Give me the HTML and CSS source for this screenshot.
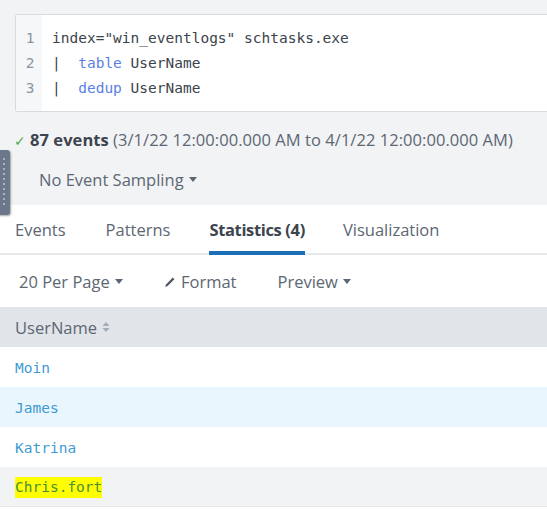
FILE: index.html
```html
<!DOCTYPE html>
<html>
<head>
<meta charset="utf-8">
<link rel="stylesheet" href="styles.css">
</head>
<body>
<div class="top">
  <div class="editor">
    <div class="gutter">
      <div class="ln">1</div>
      <div class="ln">2</div>
      <div class="ln">3</div>
    </div>
    <div class="code">
      <div class="cl">index="win_eventlogs" schtasks.exe</div>
      <div class="cl">|&nbsp; <span class="kw">table</span> UserName</div>
      <div class="cl">|&nbsp; <span class="kw">dedup</span> UserName</div>
    </div>
  </div>
  <div class="status"><span class="check">✓</span><b>87 events</b> (3/1/22 12:00:00.000 AM to 4/1/22 12:00:00.000 AM)</div>
  <div class="sampling">No Event Sampling <span class="caret"></span></div>
  <div class="handle"><span></span></div>
</div>
<div class="tabs">
  <div class="tab">Events</div>
  <div class="tab pat">Patterns</div>
  <div class="tab active">Statistics (4)</div>
  <div class="tab">Visualization</div>
</div>
<div class="toolbar">
  <div class="tool">20 Per Page <span class="caret"></span></div>
  <div class="tool fmt"><svg width="12" height="12" viewBox="0 0 12 12"><path d="M1.2 11 L2 8.4 L8.8 1.6 L10.4 3.2 L3.6 10 Z" fill="#4d5662"/></svg>Format</div>
  <div class="tool prev">Preview <span class="caret"></span></div>
</div>
<div class="table">
  <div class="th">UserName <svg class="sort" width="8" height="12" viewBox="0 0 8 12"><path d="M4 1 L7.5 5 H0.5 Z M4 11 L7.5 7 H0.5 Z" fill="#a3abb5"/></svg></div>
  <div class="tr"><span class="val">Moin</span></div>
  <div class="tr alt"><span class="val">James</span></div>
  <div class="tr"><span class="val">Katrina</span></div>
  <div class="tr last"><span class="val hl">Chris.fort</span></div>
</div>
</body>
</html>
```
FILE: styles.css
```css
* { box-sizing: border-box; }
html, body { margin: 0; padding: 0; background: #fff; }
body { font-family: "Open Sans", "Liberation Sans", sans-serif; color: #5c6773; width: 547px; overflow: hidden; }

.top { background: #f2f3f5; height: 205px; padding-top: 14px; position: relative; }
.editor {
  margin-left: 15px; height: 98px;
  border: 1px solid #d7dbe0; border-right: none; border-radius: 3px 0 0 3px;
  background: #fff; display: flex;
}
.gutter { width: 26px; background: #f6f7f8; padding-top: 11px; }
.ln { height: 25px; line-height: 25px; font-family: "DejaVu Sans Mono", monospace; font-size: 14.5px; color: #8a95a1; text-align: center; padding-left: 2px; }
.code { padding-top: 11px; padding-left: 10px; }
.cl { height: 25px; line-height: 25px; font-family: "DejaVu Sans Mono", monospace; font-size: 14.5px; color: #3c444d; white-space: pre; }
.kw { color: #5c80e6; }

.status { margin-top: 17px; margin-left: 14px; font-size: 16.5px; line-height: 22px; color: #5c6773; white-space: nowrap; letter-spacing: 0.05px; }
.status b { color: #3c444d; font-weight: 700; }
.check { color: #4fa84f; font-size: 14px; margin-right: 4px; }
.sampling { margin-top: 17px; margin-left: 39px; font-size: 16.5px; line-height: 22px; color: #5c6773; }
.caret { display: inline-block; width: 0; height: 0; border-left: 4.5px solid transparent; border-right: 4.5px solid transparent; border-top: 5px solid #5c6773; vertical-align: 4px; margin-left: 1px; }

.handle { position: absolute; left: -3px; top: 150px; width: 13px; height: 65px; background: #6b788b; border-radius: 3px; box-shadow: 1px 1px 2px rgba(0,0,0,0.35); }
.handle span { position: absolute; left: 6px; top: 8px; width: 2px; height: 50px; background: repeating-linear-gradient(#a8b2c0 0 2px, transparent 2px 5px); }

.tabs { display: flex; height: 50px; border-bottom: 2px solid #e6e9ec; padding-left: 15px; }
.tab { font-size: 16.5px; line-height: 22px; padding-top: 14px; margin-right: 40px; color: #5c6773; }
.tab.pat { margin-right: 39px; }
.tab.active { font-weight: 700; color: #3c444d; border-bottom: 4px solid #1a6fb7; margin-bottom: -2px; padding: 14px 0 0; margin-right: 38px; letter-spacing: -0.35px; }

.toolbar { display: flex; height: 52px; align-items: center; padding-left: 19px; padding-top: 2px; }
.tool { font-size: 16.5px; line-height: 22px; color: #5c6773; }
.fmt { margin-left: 41px; display: flex; align-items: center; gap: 5px; }
.prev { margin-left: 41px; }

.th { height: 40px; background: #e1e4e8; display: flex; align-items: center; padding-left: 15px; font-size: 16.5px; color: #5c6773; gap: 5px; }
.tr { height: 40px; display: flex; align-items: center; padding-left: 15px; padding-top: 1px; background: #fff; }
.tr.alt { background: #eaf6fd; }
.tr.last { background: #f2f3f5; border-bottom: 1px solid #e6e9ec; }
.val { font-family: "DejaVu Sans Mono", monospace; font-size: 14.5px; color: #3f9ad3; }
.hl { background: #ffff00; color: #4a8f3a; padding: 2px 0 3px; }
```
